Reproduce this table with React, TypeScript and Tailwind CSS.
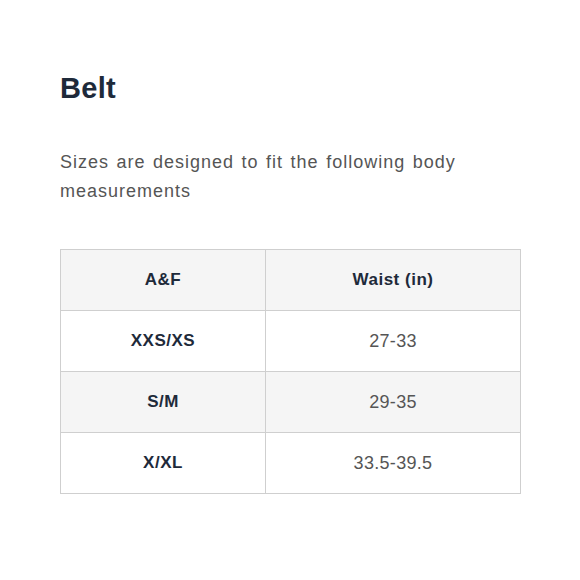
const rows = [
  { size: "XXS/XS", waist: "27-33" },
  { size: "S/M", waist: "29-35" },
  { size: "X/XL", waist: "33.5-39.5" },
];

export default function App() {
  return (
    <div className="w-[580px] h-[580px] bg-white px-[60px] pt-[70px] font-['Liberation_Sans',sans-serif]">
      <h1 className="text-[29px] leading-[36px] font-bold text-[#1e2a3a] tracking-[0.3px]">Belt</h1>

      <p className="mt-[42px] text-[18px] leading-[29px] text-[#555] tracking-[1px] [word-spacing:1.5px]">
        Sizes are designed to fit the following body measurements
      </p>

      <table className="mt-[43px] w-[461px] border-collapse border border-[#cfcfcf] text-center">
        <thead>
          <tr className="bg-[#f5f5f5] h-[61px]">
            <th className="w-[205px] border border-[#cfcfcf] text-[17px] font-bold text-[#1e2a3a] tracking-[0.5px]">A&amp;F</th>
            <th className="border border-[#cfcfcf] text-[17px] font-bold text-[#1e2a3a] tracking-[0.5px]">Waist (in)</th>
          </tr>
        </thead>
        <tbody>
          {rows.map((r, i) => (
            <tr key={r.size} className={`h-[61px] ${i % 2 === 1 ? "bg-[#f5f5f5]" : "bg-white"}`}>
              <td className="border border-[#cfcfcf] text-[17px] font-bold text-[#1e2a3a] tracking-[0.5px]">{r.size}</td>
              <td className="border border-[#cfcfcf] text-[18px] text-[#555] tracking-[0.3px]">{r.waist}</td>
            </tr>
          ))}
        </tbody>
      </table>
    </div>
  );
}
